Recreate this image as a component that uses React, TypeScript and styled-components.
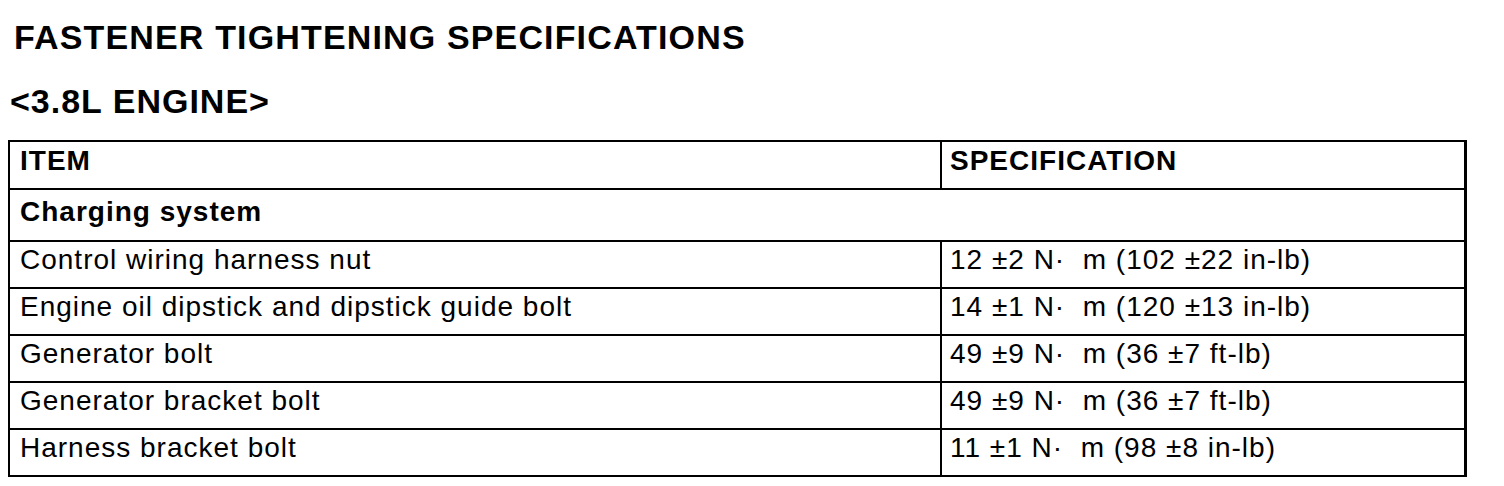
import styled, { createGlobalStyle } from 'styled-components';

const GlobalStyle = createGlobalStyle`
	html, body {
		margin: 0;
		padding: 0;
		background: #fff;
	}
	body {
		font-family: 'Liberation Sans', Arial, sans-serif;
		color: #000;
	}
`;

type Row = { item: string; spec?: string };

const groupName = 'Charging system';

const rows: Row[] = [
	{ item: 'Control wiring harness nut', spec: '12 \u00b12 N\u00b7  m (102 \u00b122 in-lb)' },
	{ item: 'Engine oil dipstick and dipstick guide bolt', spec: '14 \u00b11 N\u00b7  m (120 \u00b113 in-lb)' },
	{ item: 'Generator bolt', spec: '49 \u00b19 N\u00b7  m (36 \u00b17 ft-lb)' },
	{ item: 'Generator bracket bolt', spec: '49 \u00b19 N\u00b7  m (36 \u00b17 ft-lb)' },
	{ item: 'Harness bracket bolt', spec: '11 \u00b11 N\u00b7  m (98 \u00b18 in-lb)' },
];

const Page = styled.div`
	width: 1504px;
	height: 486px;
	padding: 17px 0 0 8px;
	box-sizing: border-box;
	overflow: hidden;
`;

const Title = styled.h1`
	margin: 0 0 0 6px;
	font-size: 34px;
	font-weight: bold;
	line-height: 40px;
	letter-spacing: 1.15px;
`;

const Subtitle = styled.h2`
	margin: 24px 0 0 2px;
	font-size: 34px;
	font-weight: bold;
	line-height: 40px;
	letter-spacing: 1px;
`;

const Table = styled.div`
	margin-top: 19px;
	width: 1459px;
	box-sizing: border-box;
	border-top: 2px solid #000;
	border-left: 2px solid #000;
	border-right: 3px solid #000;
`;

const TableRow = styled.div<{ $h: number }>`
	display: grid;
	grid-template-columns: 932px 1fr;
	height: ${(p) => p.$h}px;
	border-bottom: 2px solid #000;
`;

const Cell = styled.div<{ $pt: number; $bold?: boolean; $span?: boolean }>`
	padding: ${(p) => p.$pt}px 8px 0 10px;
	font-size: 28px;
	line-height: 32px;
	letter-spacing: 1px;
	font-weight: ${(p) => (p.$bold ? 'bold' : 'normal')};
	white-space: pre;
	grid-column: ${(p) => (p.$span ? '1 / -1' : 'auto')};

	& + & {
		padding-left: 8px;
	}

	&:first-child {
		border-right: ${(p) => (p.$span ? 'none' : '2px solid #000')};
	}
`;

export default function App() {
	return (
		<Page>
			<GlobalStyle />
			<Title>FASTENER TIGHTENING SPECIFICATIONS</Title>
			<Subtitle>&lt;3.8L ENGINE&gt;</Subtitle>
			<Table>
				<TableRow $h={46}>
					<Cell $pt={3} $bold>ITEM</Cell>
					<Cell $pt={3} $bold>SPECIFICATION</Cell>
				</TableRow>
				<TableRow $h={50}>
					<Cell $pt={6} $bold $span>
						{groupName}
					</Cell>
				</TableRow>
				{rows.map((r) => (
					<TableRow key={r.item} $h={45}>
						<Cell $pt={2}>{r.item}</Cell>
						<Cell $pt={2}>{r.spec}</Cell>
					</TableRow>
				))}
			</Table>
		</Page>
	);
}
